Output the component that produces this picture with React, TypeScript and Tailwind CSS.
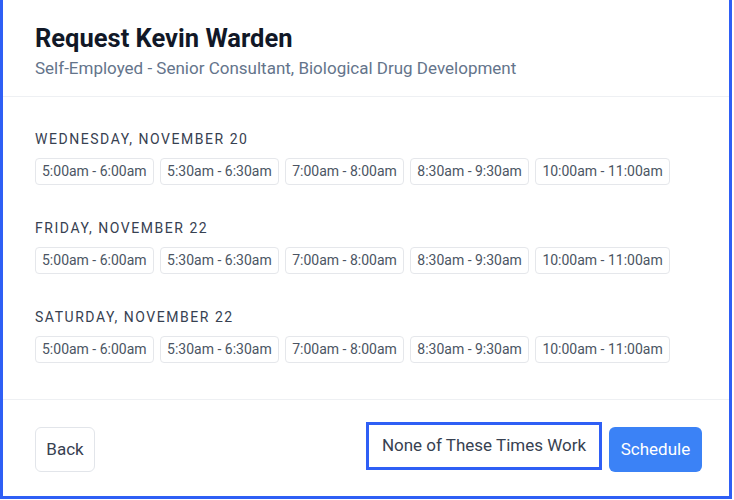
const days = ["Wednesday, November 20", "Friday, November 22", "Saturday, November 22"]
const slots = ["5:00am - 6:00am", "5:30am - 6:30am", "7:00am - 8:00am", "8:30am - 9:30am", "10:00am - 11:00am"]

export default function App() {
  return (
    <div className="w-[734px] h-[500px] bg-white font-['Roboto',sans-serif]">
      <div className="w-[732px] h-[499px] border-x-[3px] border-b-[3px] border-[#2f5ff5] flex flex-col">
        <header className="px-8 pt-[22px] pb-4 border-b border-[#eef0f3]">
          <h1 className="text-[25.5px] leading-[32px] font-bold text-[#111827]">Request Kevin Warden</h1>
          <p className="mt-[2px] text-[17px] leading-[24px] text-[#64748b]">
            Self-Employed - Senior Consultant, Biological Drug Development
          </p>
        </header>

        <main className="flex-1 px-8 pt-8 flex flex-col gap-[33px]">
          {days.map((day) => (
            <section key={day}>
              <h2 className="text-[14px] leading-[20px] uppercase tracking-[0.11em] text-[#374151]">{day}</h2>
              <div className="mt-[9px] flex gap-[6.5px]">
                {slots.map((s) => (
                  <button
                    key={s}
                    className="h-[27px] px-[6px] rounded-[4px] border border-[#e5e7eb] text-[14px] text-[#4b5563] bg-white"
                  >
                    {s}
                  </button>
                ))}
              </div>
            </section>
          ))}
        </main>

        <footer className="h-[97px] border-t border-[#eef0f3] pl-8 pr-[27px] flex items-center justify-between">
          <button className="mt-[3px] h-[45px] w-[60px] rounded-[6px] border border-[#e2e5ea] text-[17px] text-[#374151] bg-white">
            Back
          </button>
          <div className="flex items-center">
            <button className="h-[48px] w-[236px] mb-[4px] border-[3px] border-[#2f5ff5] text-[17px] text-[#374151] bg-white">
              None of These Times Work
            </button>
            <button className="ml-[7px] mt-[3px] h-[45px] w-[93px] rounded-[6px] bg-[#3b82f6] text-[17px] text-white">
              Schedule
            </button>
          </div>
        </footer>
      </div>
    </div>
  )
}
